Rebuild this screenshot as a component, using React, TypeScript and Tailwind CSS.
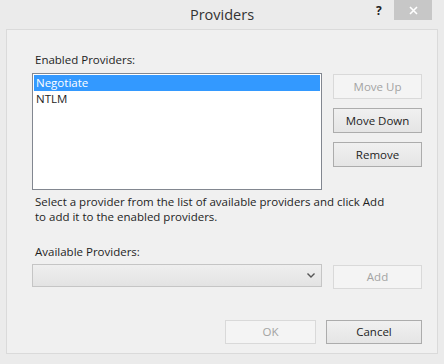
import React from "react";

const font = { fontFamily: '"Segoe UI", "Open Sans", "Noto Sans", sans-serif' };

const Btn: React.FC<{ label: string; disabled?: boolean; className?: string }> = ({
  label,
  disabled,
  className = "",
}) => (
  <div
    className={
      "flex items-center justify-center text-[11.5px] border " +
      (disabled
        ? "border-[#d9d9d9] bg-[#f4f4f4] text-[#a3a3a3] "
        : "border-[#acacac] bg-gradient-to-b from-[#f0f0f0] to-[#e5e5e5] text-[#1e1e1e] ") +
      className
    }
  >
    {label}
  </div>
);

const App: React.FC = () => {
  return (
    <div style={font} className="w-[444px] h-[364px] bg-[#ebebeb] flex flex-col overflow-hidden">
      {/* title bar */}
      <div className="relative h-[29px] flex items-center justify-center">
        <span className="text-[14.5px] text-[#333333] mt-[1px]">Providers</span>
        <span className="absolute left-[376px] top-[2px] text-[12px] font-bold text-[#222]">?</span>
        <div className="absolute left-[394px] top-0 w-[38px] h-[20px] bg-[#c7c7c7] flex items-center justify-center">
          <svg width="9" height="9" viewBox="0 0 9 9">
            <path d="M1 1 L8 8 M8 1 L1 8" stroke="#ffffff" strokeWidth="1.6" />
          </svg>
        </div>
      </div>

      {/* content panel */}
      <div className="mx-[6px] h-[325px] border border-[#dadada] bg-[#f0f0f0] pt-[22px] pl-[25px] pr-[15px] flex flex-col text-[11.5px] text-[#1e1e1e]">
        <div className="pl-[3px] h-[15px] leading-[15px]">Enabled Providers:</div>
        <div className="mt-[6px] flex">
          <div className="w-[290px] h-[117px] border border-[#828790] bg-white p-[1px]">
            <div className="h-[16px] leading-[16px] bg-[#3399ff] text-white pl-[2px]">Negotiate</div>
            <div className="h-[16px] leading-[16px] pl-[2px]">NTLM</div>
          </div>
          <div className="ml-[11px] w-[89px] pt-[1px] flex flex-col gap-[9px]">
            <Btn label="Move Up" disabled className="h-[25px]" />
            <Btn label="Move Down" className="h-[25px]" />
            <Btn label="Remove" className="h-[25px]" />
          </div>
        </div>
        <div className="mt-[4px] pl-[3px]">
          <div className="h-[15px] leading-[15px] whitespace-nowrap">
            Select a provider from the list of available providers and click Add
          </div>
          <div className="h-[15px] leading-[15px]">to add it to the enabled providers.</div>
        </div>
        <div className="mt-[20px] pl-[3px] h-[15px] leading-[15px]">Available Providers:</div>
        <div className="mt-[5px] flex items-start">
          <div className="w-[290px] h-[23px] border border-[#c5c5c5] bg-gradient-to-b from-[#efefef] to-[#e3e3e3] flex items-center justify-end pr-[6px]">
            <svg width="8" height="5" viewBox="0 0 8 5">
              <path d="M0.5 0.5 L4 4 L7.5 0.5" fill="none" stroke="#555555" strokeWidth="1.4" />
            </svg>
          </div>
          <Btn label="Add" disabled className="ml-[11px] mt-[1px] w-[89px] h-[24px]" />
        </div>
        <div className="mt-[31px] flex justify-end gap-[10px]">
          <Btn label="OK" disabled className="w-[91px] h-[24px]" />
          <Btn label="Cancel" className="w-[96px] h-[24px]" />
        </div>
      </div>
    </div>
  );
};

export default App;
